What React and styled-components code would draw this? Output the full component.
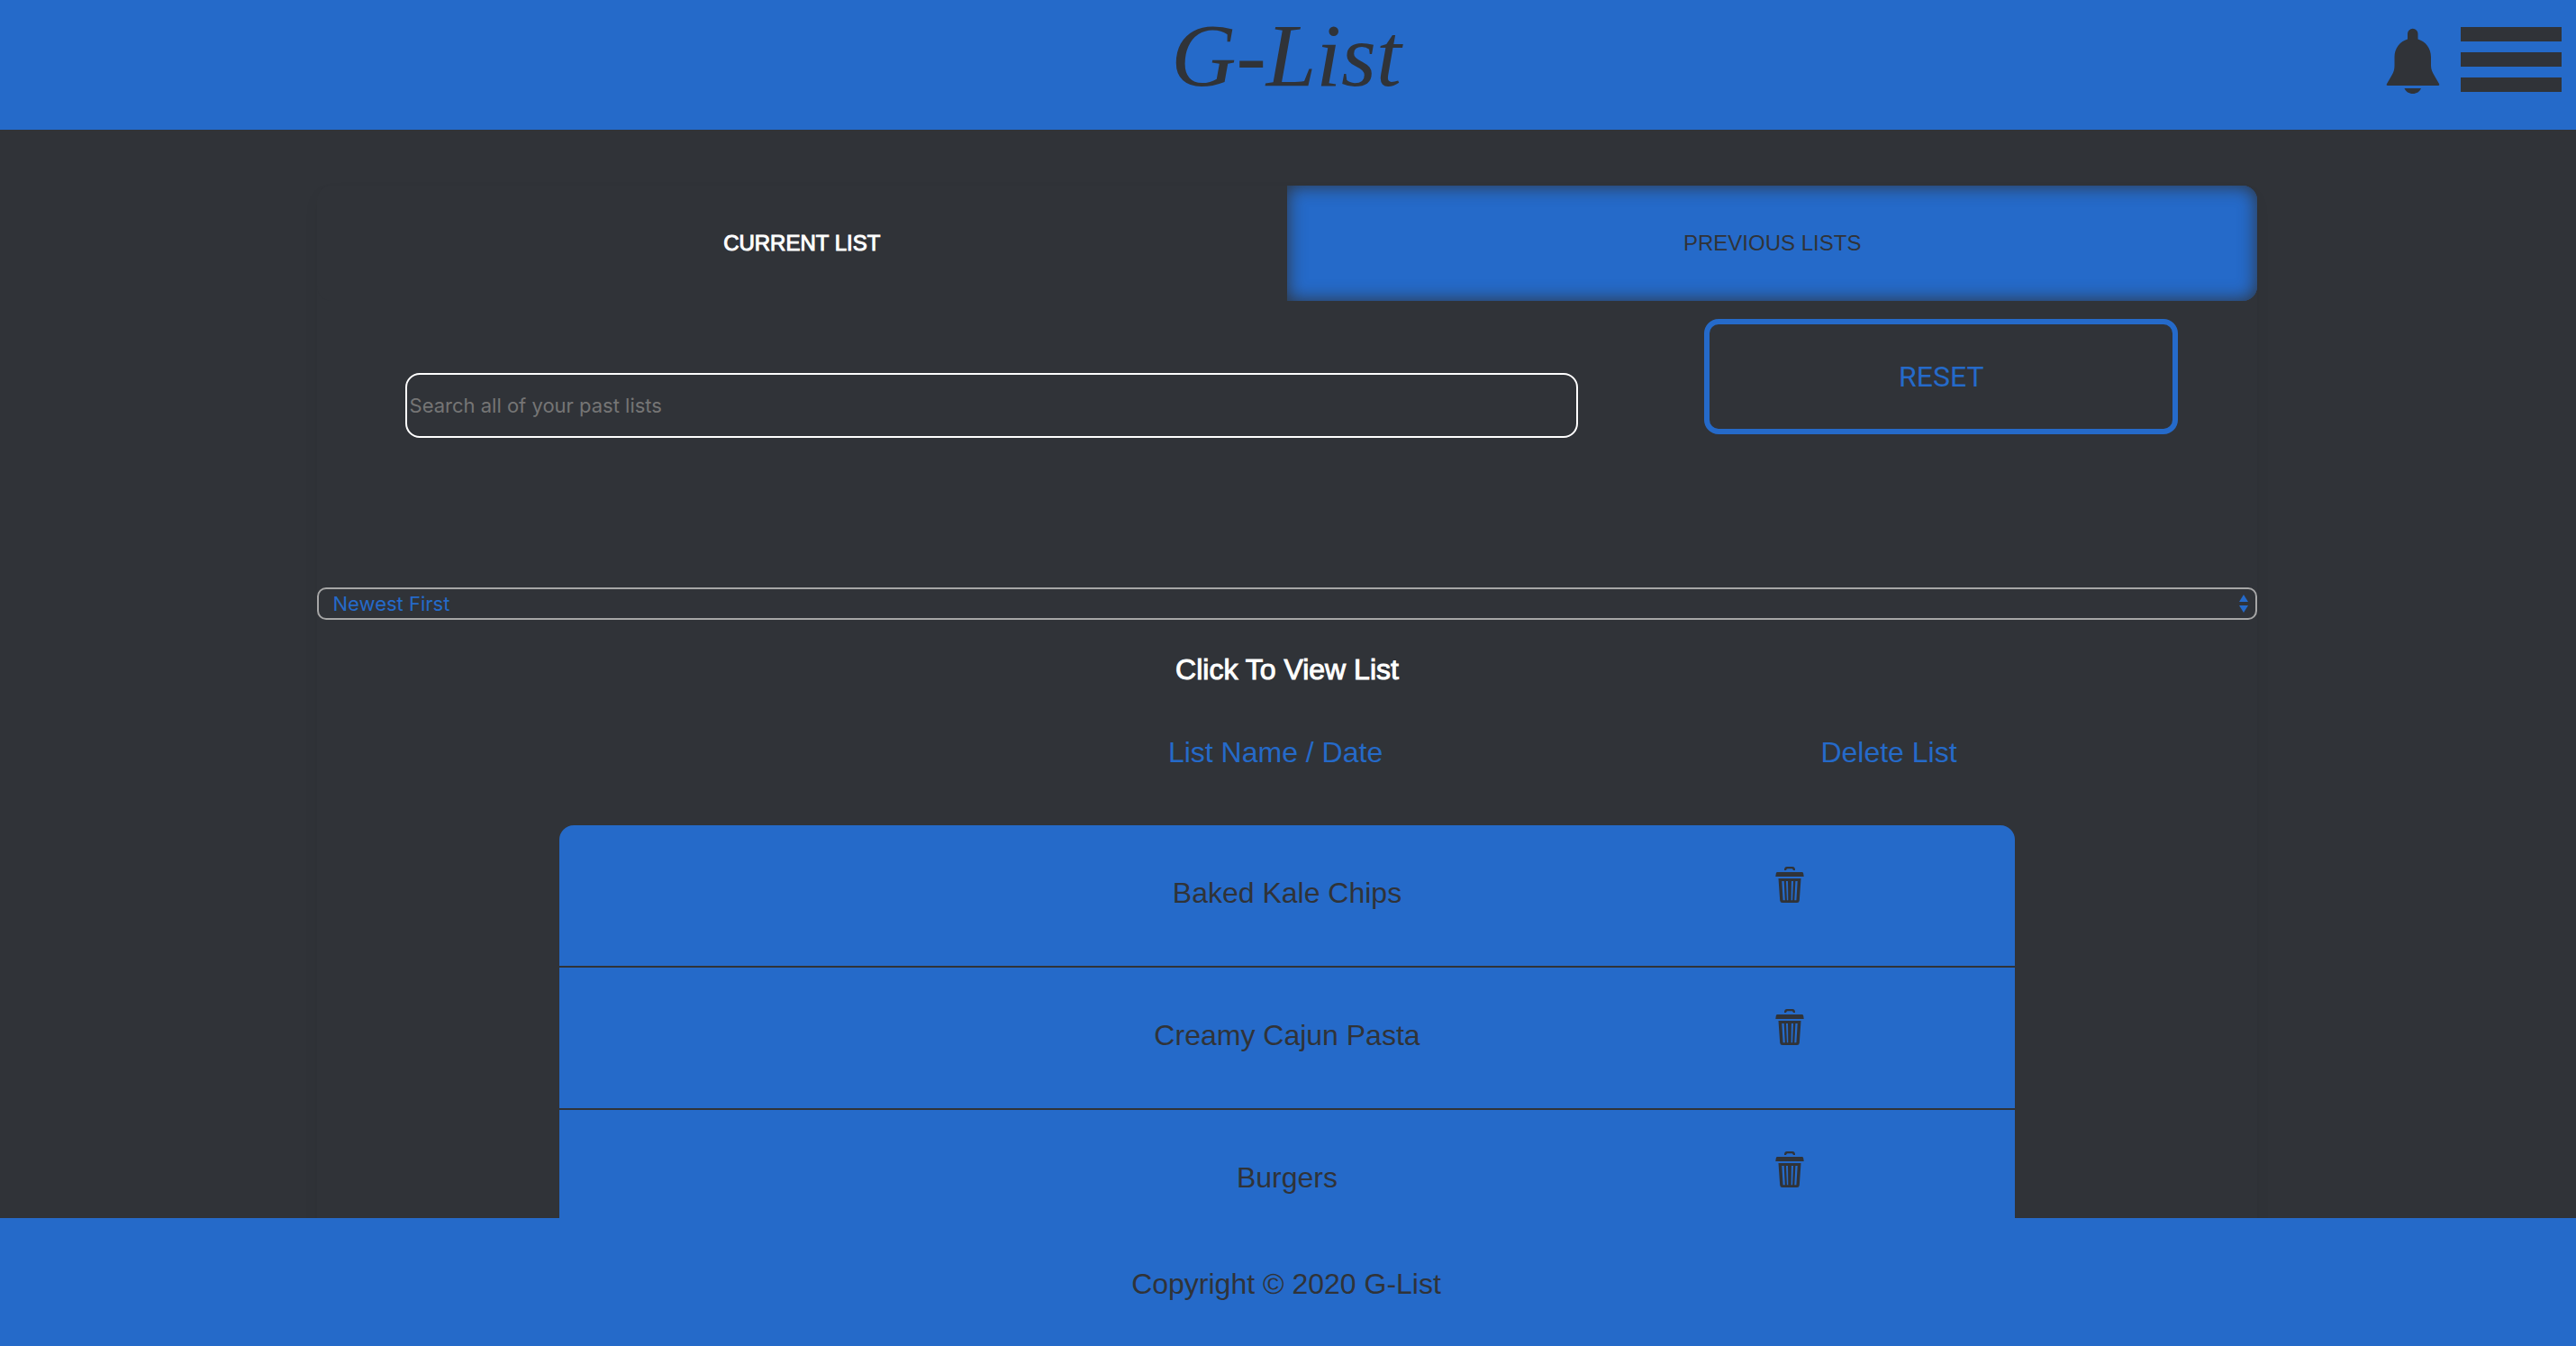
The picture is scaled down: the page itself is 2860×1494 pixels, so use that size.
import React from "react";
import styled, { createGlobalStyle } from "styled-components";

const blue = "#256ac9";
const dark = "#303338";
const sans = '"Liberation Sans", Arial, sans-serif';
const ui = 'Inter, "Liberation Sans", sans-serif';

const GlobalStyle = createGlobalStyle`
  *, *::before, *::after { box-sizing: border-box; }
  body {
    margin: 0;
    background: ${dark};
    color: ${dark};
    font-family: ${sans};
    font-size: 32px;
    line-height: 36px;
  }
  button { font: inherit; color: inherit; border: 0; background: none; padding: 0; cursor: pointer; }
  svg { display: block; }
`;

const Page = styled.div`
  display: flex;
  flex-direction: column;
  height: 100vh;
`;

const Header = styled.header`
  flex: none;
  display: grid;
  grid-template-columns: 1fr auto 1fr;
  align-items: center;
  height: 144px;
  padding: 0 16px 12px 12px;
  background: ${blue};
`;

const Logo = styled.a`
  grid-column: 2;
  padding-bottom: 8px;
  color: ${dark};
  text-decoration: none;
  font-family: "Liberation Serif", "Times New Roman", serif;
  font-style: italic;
  font-size: 100px;
  line-height: 120px;
`;

const HeaderActions = styled.div`
  display: flex;
  justify-content: flex-end;
  align-items: center;
  gap: 23px;
`;

const IconButton = styled.button`
  display: inline-flex;
`;

const MenuButton = styled.button`
  display: flex;
  flex-direction: column;
  gap: 12px;
  width: 112px;
`;

const Bar = styled.span`
  height: 16px;
  background: ${dark};
`;

const Main = styled.main`
  flex: 1;
  min-height: 0;
  overflow: hidden;
  padding: 62px 2px 0 0;
`;

const Card = styled.section`
  width: 75.4%;
  margin: 0 auto;
  border-radius: 16px;
  box-shadow: 0 8px 16px rgba(0, 0, 0, 0.06);
`;

const Tabs = styled.nav`
  display: grid;
  grid-template-columns: 1fr 1fr;
`;

const Tab = styled.button`
  height: 128px;
  font-size: 24px;
  text-transform: uppercase;
  border-radius: ${(p) => (p.$raised ? "0 16px 16px 0" : "16px 0 0 16px")};
  color: ${(p) => (p.$raised ? dark : "#fff")};
  background: ${(p) => (p.$raised ? blue : dark)};
  box-shadow: ${(p) => (p.$raised ? `inset 0 0 20px ${dark}` : "none")};
  -webkit-text-stroke: ${(p) => (p.$raised ? "0" : "1px #fff")};
`;

const Tools = styled.form`
  display: grid;
  grid-template-columns: 1302fr 526fr;
  column-gap: 140px;
  align-items: start;
  padding: 20px 88px 166px 98px;
`;

const Search = styled.input`
  width: 100%;
  height: 72px;
  margin-top: 60px;
  padding: 0 3px;
  border: 2px solid #fff;
  border-radius: 16px;
  background: ${dark};
  color: #fff;
  font-family: ${ui};
  font-size: 22px;
  &::placeholder { color: #757575; opacity: 1; }
`;

const ResetButton = styled.button`
  height: 128px;
  border: 6px solid ${blue};
  border-radius: 16px;
  color: ${blue};
  font-family: Roboto, "Liberation Sans", sans-serif;
`;

const SortField = styled.div`
  position: relative;
`;

const Sort = styled.select`
  display: block;
  appearance: none;
  width: 100%;
  height: 36px;
  padding: 0 16px;
  border: 2px solid #a6a6a6;
  border-radius: 10px;
  background: ${dark};
  color: ${blue};
  font-family: ${ui};
  font-size: 22px;
`;

const SortArrows = styled.svg`
  position: absolute;
  top: 8px;
  right: 10px;
  pointer-events: none;
`;

const Title = styled.h1`
  margin: 37px 0 56px;
  color: #fff;
  font-size: 32px;
  font-weight: 400;
  text-align: center;
  -webkit-text-stroke: 1px #fff;
`;

const Columns = styled.div`
  display: grid;
  grid-template-columns: 184fr 126fr 190fr;
  margin-bottom: 63px;
  color: ${blue};
  text-align: center;
`;

const ColumnName = styled.span`
  grid-column: ${(p) => p.$column};
  white-space: nowrap;
`;

const Lists = styled.ul`
  width: 75%;
  margin: 0 auto;
  padding: 0;
  list-style: none;
  overflow: hidden;
  border-radius: 16px;
  background: ${blue};
`;

const ListRow = styled.li`
  display: grid;
  grid-template-columns: 31fr 38fr 31fr;
  align-items: baseline;
  justify-items: center;
  height: 158px;
  padding-top: 46px;
  border-bottom: 2px solid ${dark};
`;

const ListName = styled.button`
  grid-column: 2;
`;

const Footer = styled.footer`
  flex: none;
  display: flex;
  align-items: center;
  justify-content: center;
  height: 142px;
  padding: 4px 4px 0 0;
  background: ${blue};
`;

const BellIcon = () => (
  <svg width="60" height="76" viewBox="0 -4 60 76" fill={dark} aria-hidden="true">
    <path d="M24 11.500V5.500A5.750 5.750 0 0 1 35.500 5.500V11.500C44 14 50 21.500 50 31.500V41C50 45 51.500 48 53.500 51.500L59 61C59.600 62.200 59.200 63 58 63H2C0.800 63 0.200 62.200 1 61L6.500 51.500C8.500 48 9.500 45 9.500 41V31.500C9.500 21.500 15.500 14 24 11.500Z" />
    <path d="M20.500 66H39C37.500 69.700 34 72 29.750 72S22 69.700 20.500 66Z" />
  </svg>
);

const TrashIcon = () => (
  <svg width="32" height="40" viewBox="0 0 32 40" fill={dark} aria-hidden="true">
    <path d="M10 4V3Q10.300 0 13 0H19Q21.700 0 22 3V4H20Q19.500 2.300 18.500 2.300H13.500Q12.500 2.300 12 4Z" />
    <path d="M2 6H30Q31 6 31.200 7.500L31.700 11H.3L.8 7.500Q1 6 2 6Z" />
    <path
      fillRule="evenodd"
      d="M3.500 13H28.500L26.800 37.500Q26.600 40 24 40H8Q5.400 40 5.200 37.500ZM7.300 16L8.600 37.300H10.800L9.700 16ZM14 16L14.300 37.300H12.900L12 16ZM17.900 16H20L19.100 37.300H17.600ZM22.400 16H24.700L23.400 37.300H21.300Z"
    />
  </svg>
);

const lists = ["Baked Kale Chips", "Creamy Cajun Pasta", "Burgers"];

export default function App() {
  return (
    <>
      <GlobalStyle />
      <Page>
        <Header>
          <Logo href="#">G-List</Logo>
          <HeaderActions>
            <IconButton type="button" aria-label="Notifications">
              <BellIcon />
            </IconButton>
            <MenuButton type="button" aria-label="Menu">
              <Bar />
              <Bar />
              <Bar />
            </MenuButton>
          </HeaderActions>
        </Header>
        <Main>
          <Card>
            <Tabs>
              <Tab type="button">Current List</Tab>
              <Tab type="button" $raised>Previous Lists</Tab>
            </Tabs>
            <Tools>
              <Search type="text" aria-label="Search past lists" placeholder="Search all of your past lists" />
              <ResetButton type="reset">RESET</ResetButton>
            </Tools>
            <SortField>
              <Sort aria-label="Sort lists" defaultValue="newest">
                <option value="newest">Newest First</option>
                <option value="oldest">Oldest First</option>
              </Sort>
              <SortArrows width="10" height="20" viewBox="0 0 10 20" fill={blue} aria-hidden="true">
                <path d="M0 8L5 0L10 8ZM0 12H10L5 20Z" />
              </SortArrows>
            </SortField>
            <Title>Click To View List</Title>
            <Columns>
              <ColumnName $column={2}>List Name / Date</ColumnName>
              <ColumnName $column={3}>Delete List</ColumnName>
            </Columns>
            <Lists>
              {lists.map((name) => (
                <ListRow key={name}>
                  <ListName type="button">{name}</ListName>
                  <IconButton type="button" aria-label={`Delete ${name}`}>
                    <TrashIcon />
                  </IconButton>
                </ListRow>
              ))}
            </Lists>
          </Card>
        </Main>
        <Footer>Copyright © 2020 G-List</Footer>
      </Page>
    </>
  );
}
